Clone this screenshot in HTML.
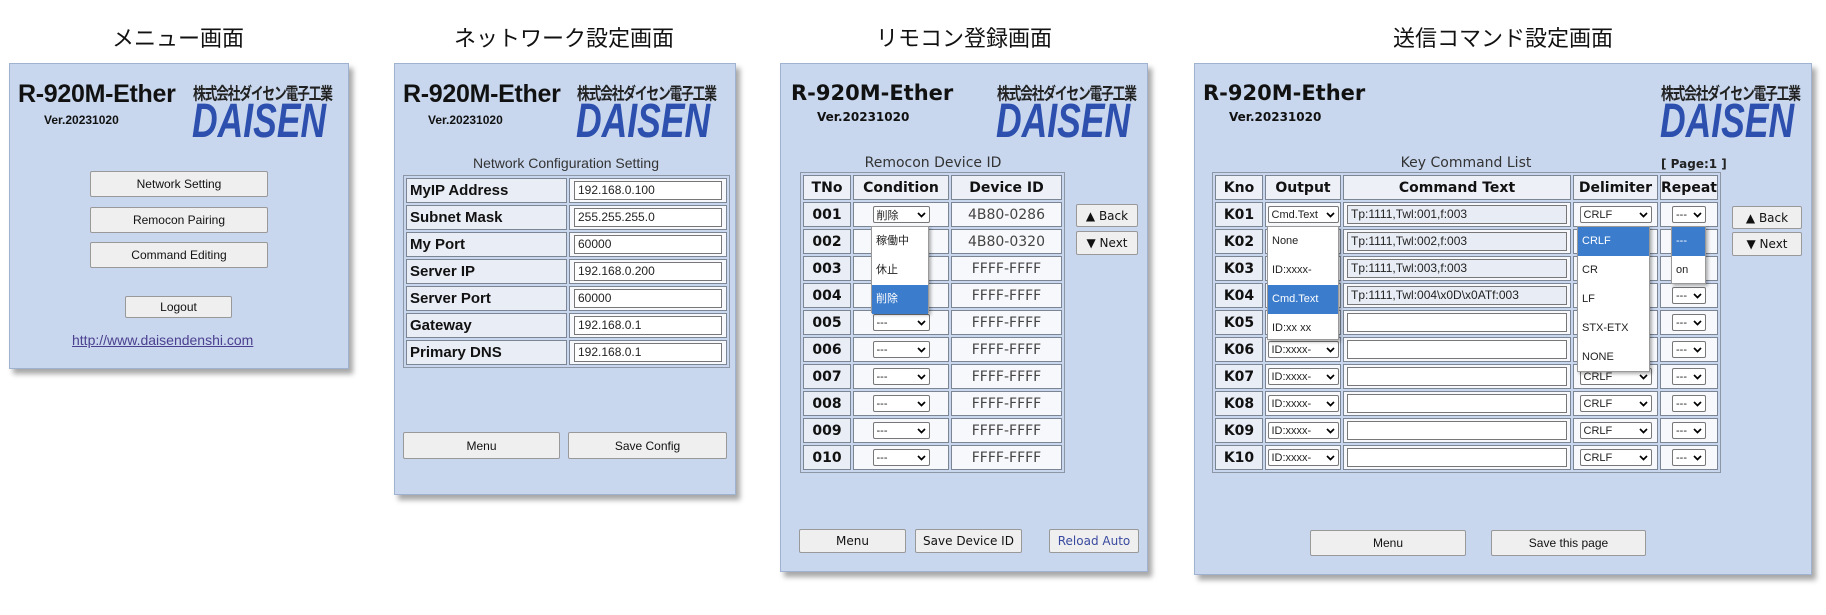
<!DOCTYPE html>
<html><head><meta charset="utf-8">
<style>
*{box-sizing:border-box;margin:0;padding:0}
body{width:1826px;height:615px;background:#fff;position:relative;overflow:hidden;font-family:"Liberation Sans","Noto Sans CJK JP",sans-serif}
.a{position:absolute}
.ttl{position:absolute;top:21px;font-size:22px;font-family:"Noto Sans CJK JP",sans-serif;color:#111;transform:translateX(-50%);white-space:nowrap}
.pn{position:absolute;background:#c8d7ee;border:1px solid #9fb2cf;box-shadow:4px 5px 5px rgba(0,0,0,.35)}
.h1a{position:absolute;font:bold 25px "Liberation Sans",sans-serif;color:#111;letter-spacing:-.3px}
.h1b{position:absolute;font:bold 21px "DejaVu Sans",sans-serif;color:#111}
.ver{position:absolute;font:bold 12px "Liberation Sans",sans-serif;color:#111}
.verb{position:absolute;font:bold 12px "DejaVu Sans",sans-serif;color:#111}
.lj{position:absolute;font:bold 13px "Noto Sans CJK JP",sans-serif;color:#222;letter-spacing:-1.2px;white-space:nowrap;transform-origin:left top;transform:scale(0.98,1.3)}
.ld{position:absolute;font:italic 900 48px "Liberation Sans",sans-serif;color:#2d4fae;line-height:36px;transform-origin:left top;transform:scale(0.74,1)}
.btn{position:absolute;background:#efefef;border:1px solid #999;border-radius:2px;font:12px "Liberation Sans",sans-serif;color:#111;display:flex;align-items:center;justify-content:center}
.btn2{position:absolute;background:#efefef;border:1px solid #999;border-radius:2px;font:12px "DejaVu Sans",sans-serif;color:#111;display:flex;align-items:center;justify-content:center}
.cap{position:absolute;font:14px "DejaVu Sans",sans-serif;color:#333;transform:translateX(-50%);white-space:nowrap}
table{position:absolute;border:1px solid #8c96a6;border-spacing:2px;table-layout:fixed;background:#c8d7ee}
td{border:1px solid #7c8594;background:#f7f8fb;height:25px;padding:0;text-align:center;font:14px "DejaVu Sans",sans-serif;color:#444;white-space:nowrap;overflow:visible;position:relative}
td.l{background:#e9edf6;font-weight:bold;color:#111}
td.hd{background:#edf0f7;font-weight:bold;color:#111}
.t2 td.l{text-align:left;padding-left:3px;font:bold 15px "Liberation Sans",sans-serif}
.inp{display:block;margin:0 auto;height:19px;border:1px solid #777;background:#fff;font:12px "Liberation Sans",sans-serif;color:#222;text-align:left;padding-left:3px;line-height:17px}
.sel{display:inline-flex;align-items:center;justify-content:space-between;height:17px;border:1px solid #777;border-radius:2px;background:#fff;font:11px "Liberation Sans",sans-serif;color:#222;padding:0 3px;vertical-align:middle;text-align:left}
.list{position:absolute;background:#fff;border:1px solid #999;box-shadow:2px 2px 3px rgba(0,0,0,.3);font:11px "Liberation Sans","Noto Sans CJK JP",sans-serif;color:#222}
.list div{height:29px;line-height:29px;padding-left:4px}
.list .hl{background:#3b7ccc;color:#fff}
</style></head><body>
<svg width="0" height="0" style="position:absolute"><defs><symbol id="cv" viewBox="0 0 9 6"><path d="M1 1l3.5 3.5L8 1" stroke="#000" stroke-width="1.7" fill="none"/></symbol></defs></svg>

<div class="ttl" style="left:178px">メニュー画面</div>
<div class="ttl" style="left:564px">ネットワーク設定画面</div>
<div class="ttl" style="left:964px">リモコン登録画面</div>
<div class="ttl" style="left:1503px">送信コマンド設定画面</div>

<!-- Panel 1 -->
<div class="pn" style="left:9px;top:63px;width:340px;height:306px"></div>
<div class="h1a" style="left:18px;top:80px">R-920M-Ether</div>
<div class="ver" style="left:44px;top:113px">Ver.20231020</div>
<div class="lj" style="left:193px;top:80px">株式会社ダイセン電子工業</div>
<div class="ld" style="left:192px;top:104px">DAISEN</div>
<div class="btn" style="left:90px;top:171px;width:178px;height:26px">Network Setting</div>
<div class="btn" style="left:90px;top:207px;width:178px;height:26px">Remocon Pairing</div>
<div class="btn" style="left:90px;top:242px;width:178px;height:26px">Command Editing</div>
<div class="btn" style="left:125px;top:296px;width:107px;height:22px">Logout</div>
<div class="a" style="left:72px;top:332px;font:14px 'Liberation Sans',sans-serif;color:#4b3f8f;text-decoration:underline">http://www.daisendenshi.com</div>

<!-- Panel 2 -->
<div class="pn" style="left:394px;top:63px;width:342px;height:432px"></div>
<div class="h1a" style="left:403px;top:80px">R-920M-Ether</div>
<div class="ver" style="left:428px;top:113px">Ver.20231020</div>
<div class="lj" style="left:577px;top:80px">株式会社ダイセン電子工業</div>
<div class="ld" style="left:576px;top:104px">DAISEN</div>
<div class="cap" style="left:566px;top:155px;font-family:'Liberation Sans',sans-serif">Network Configuration Setting</div>
<table class="t2" style="left:403px;top:175px;width:327px">
<colgroup><col style="width:161px"><col></colgroup>
<tr><td class="l">MyIP Address</td><td><span class="inp" style="width:148px">192.168.0.100</span></td></tr>
<tr><td class="l">Subnet Mask</td><td><span class="inp" style="width:148px">255.255.255.0</span></td></tr>
<tr><td class="l">My Port</td><td><span class="inp" style="width:148px">60000</span></td></tr>
<tr><td class="l">Server IP</td><td><span class="inp" style="width:148px">192.168.0.200</span></td></tr>
<tr><td class="l">Server Port</td><td><span class="inp" style="width:148px">60000</span></td></tr>
<tr><td class="l">Gateway</td><td><span class="inp" style="width:148px">192.168.0.1</span></td></tr>
<tr><td class="l">Primary DNS</td><td><span class="inp" style="width:148px">192.168.0.1</span></td></tr>
</table>
<div class="btn" style="left:403px;top:432px;width:157px;height:27px">Menu</div>
<div class="btn" style="left:568px;top:432px;width:159px;height:27px">Save Config</div>

<!-- Panel 3 -->
<div class="pn" style="left:780px;top:63px;width:368px;height:509px"></div>
<div class="h1b" style="left:791px;top:81px">R-920M-Ether</div>
<div class="verb" style="left:817px;top:110px">Ver.20231020</div>
<div class="lj" style="left:997px;top:80px">株式会社ダイセン電子工業</div>
<div class="ld" style="left:996px;top:104px">DAISEN</div>
<div class="cap" style="left:933px;top:155px">Remocon Device ID</div>
<table style="left:800px;top:172px;width:265px">
<colgroup><col style="width:48px"><col style="width:96px"><col></colgroup>
<tr><td class="hd">TNo</td><td class="hd">Condition</td><td class="hd">Device ID</td></tr>
<tr><td class="l">001</td><td><span class="sel" style="width:57px">削除<svg width="9" height="6"><use href="#cv"/></svg></span></td><td>4B80-0286</td></tr>
<tr><td class="l">002</td><td></td><td>4B80-0320</td></tr>
<tr><td class="l">003</td><td></td><td>FFFF-FFFF</td></tr>
<tr><td class="l">004</td><td></td><td>FFFF-FFFF</td></tr>
<tr><td class="l">005</td><td><span class="sel" style="width:57px">---<svg width="9" height="6"><use href="#cv"/></svg></span></td><td>FFFF-FFFF</td></tr>
<tr><td class="l">006</td><td><span class="sel" style="width:57px">---<svg width="9" height="6"><use href="#cv"/></svg></span></td><td>FFFF-FFFF</td></tr>
<tr><td class="l">007</td><td><span class="sel" style="width:57px">---<svg width="9" height="6"><use href="#cv"/></svg></span></td><td>FFFF-FFFF</td></tr>
<tr><td class="l">008</td><td><span class="sel" style="width:57px">---<svg width="9" height="6"><use href="#cv"/></svg></span></td><td>FFFF-FFFF</td></tr>
<tr><td class="l">009</td><td><span class="sel" style="width:57px">---<svg width="9" height="6"><use href="#cv"/></svg></span></td><td>FFFF-FFFF</td></tr>
<tr><td class="l">010</td><td><span class="sel" style="width:57px">---<svg width="9" height="6"><use href="#cv"/></svg></span></td><td>FFFF-FFFF</td></tr>
</table>
<div class="list" style="left:871px;top:226px;width:58px;height:87px"><div>稼働中</div><div>休止</div><div class="hl">削除</div></div>
<div class="btn2" style="left:1076px;top:204px;width:62px;height:23px">▲ Back</div>
<div class="btn2" style="left:1076px;top:231px;width:62px;height:24px">▼ Next</div>
<div class="btn2" style="left:799px;top:529px;width:107px;height:24px">Menu</div>
<div class="btn2" style="left:915px;top:529px;width:107px;height:24px">Save Device ID</div>
<div class="btn2" style="left:1049px;top:529px;width:90px;height:24px;color:#3a4aa0">Reload Auto</div>

<!-- Panel 4 -->
<div class="pn" style="left:1194px;top:63px;width:618px;height:512px"></div>
<div class="h1b" style="left:1203px;top:81px">R-920M-Ether</div>
<div class="verb" style="left:1229px;top:110px">Ver.20231020</div>
<div class="lj" style="left:1661px;top:80px">株式会社ダイセン電子工業</div>
<div class="ld" style="left:1660px;top:104px">DAISEN</div>
<div class="cap" style="left:1466px;top:155px">Key Command List</div>
<div class="a" style="left:1661px;top:157px;font:bold 12px 'DejaVu Sans',sans-serif;color:#222">[ Page:1 ]</div>
<table style="left:1212px;top:172px;width:509px">
<colgroup><col style="width:48px"><col style="width:76px"><col style="width:228px"><col style="width:85px"><col></colgroup>
<tr><td class="hd">Kno</td><td class="hd">Output</td><td class="hd">Command Text</td><td class="hd">Delimiter</td><td class="hd">Repeat</td></tr>
<tr><td class="l">K01</td><td><span class="sel" style="width:71px">Cmd.Text<svg width="9" height="6"><use href="#cv"/></svg></span></td><td><span class="inp" style="width:220px;background:#e8ecf4">Tp:1111,Twl:001,f:003</span></td><td><span class="sel" style="width:72px">CRLF<svg width="9" height="6"><use href="#cv"/></svg></span></td><td><span class="sel" style="width:34px">---<svg width="9" height="6"><use href="#cv"/></svg></span></td></tr>
<tr><td class="l">K02</td><td></td><td><span class="inp" style="width:220px;background:#e8ecf4">Tp:1111,Twl:002,f:003</span></td><td></td><td></td></tr>
<tr><td class="l">K03</td><td></td><td><span class="inp" style="width:220px;background:#e8ecf4">Tp:1111,Twl:003,f:003</span></td><td></td><td></td></tr>
<tr><td class="l">K04</td><td></td><td><span class="inp" style="width:220px;background:#e8ecf4">Tp:1111,Twl:004\x0D\x0ATf:003</span></td><td></td><td><span class="sel" style="width:34px">---<svg width="9" height="6"><use href="#cv"/></svg></span></td></tr>
<tr><td class="l">K05</td><td></td><td><span class="inp" style="width:220px"></span></td><td></td><td><span class="sel" style="width:34px">---<svg width="9" height="6"><use href="#cv"/></svg></span></td></tr>
<tr><td class="l">K06</td><td><span class="sel" style="width:71px">ID:xxxx-<svg width="9" height="6"><use href="#cv"/></svg></span></td><td><span class="inp" style="width:220px"></span></td><td></td><td><span class="sel" style="width:34px">---<svg width="9" height="6"><use href="#cv"/></svg></span></td></tr>
<tr><td class="l">K07</td><td><span class="sel" style="width:71px">ID:xxxx-<svg width="9" height="6"><use href="#cv"/></svg></span></td><td><span class="inp" style="width:220px"></span></td><td><span class="sel" style="width:72px">CRLF<svg width="9" height="6"><use href="#cv"/></svg></span></td><td><span class="sel" style="width:34px">---<svg width="9" height="6"><use href="#cv"/></svg></span></td></tr>
<tr><td class="l">K08</td><td><span class="sel" style="width:71px">ID:xxxx-<svg width="9" height="6"><use href="#cv"/></svg></span></td><td><span class="inp" style="width:220px"></span></td><td><span class="sel" style="width:72px">CRLF<svg width="9" height="6"><use href="#cv"/></svg></span></td><td><span class="sel" style="width:34px">---<svg width="9" height="6"><use href="#cv"/></svg></span></td></tr>
<tr><td class="l">K09</td><td><span class="sel" style="width:71px">ID:xxxx-<svg width="9" height="6"><use href="#cv"/></svg></span></td><td><span class="inp" style="width:220px"></span></td><td><span class="sel" style="width:72px">CRLF<svg width="9" height="6"><use href="#cv"/></svg></span></td><td><span class="sel" style="width:34px">---<svg width="9" height="6"><use href="#cv"/></svg></span></td></tr>
<tr><td class="l">K10</td><td><span class="sel" style="width:71px">ID:xxxx-<svg width="9" height="6"><use href="#cv"/></svg></span></td><td><span class="inp" style="width:220px"></span></td><td><span class="sel" style="width:72px">CRLF<svg width="9" height="6"><use href="#cv"/></svg></span></td><td><span class="sel" style="width:34px">---<svg width="9" height="6"><use href="#cv"/></svg></span></td></tr>
</table>
<div class="list" style="left:1267px;top:226px;width:72px;height:114px"><div>None</div><div>ID:xxxx-</div><div class="hl">Cmd.Text</div><div>ID:xx xx</div></div>
<div class="list" style="left:1577px;top:226px;width:73px;height:146px"><div class="hl">CRLF</div><div>CR</div><div>LF</div><div>STX-ETX</div><div>NONE</div></div>
<div class="list" style="left:1671px;top:226px;width:35px;height:58px"><div class="hl">---</div><div>on</div></div>
<div class="btn2" style="left:1732px;top:206px;width:70px;height:23px">▲ Back</div>
<div class="btn2" style="left:1732px;top:232px;width:70px;height:24px">▼ Next</div>
<div class="btn" style="left:1310px;top:530px;width:156px;height:26px">Menu</div>
<div class="btn" style="left:1491px;top:530px;width:155px;height:26px">Save this page</div>
</body></html>
